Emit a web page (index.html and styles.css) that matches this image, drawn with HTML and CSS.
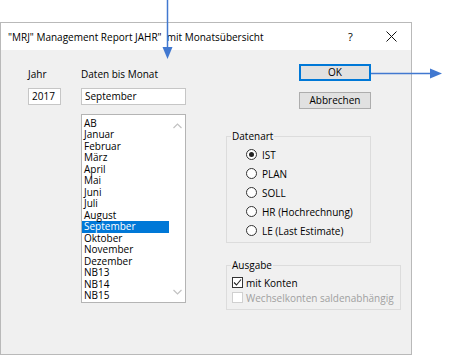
FILE: index.html
```html
<!DOCTYPE html>
<html lang="de">
<head>
    <meta charset="UTF-8">
    <meta name="viewport" content="width=device-width, initial-scale=1.0">
    <title>MRJ Management Report JAHR</title>
    <link rel="stylesheet" href="styles.css">
</head>
<body>
    <div class="dialog">
        <div class="titlebar">
            <span class="title">"MRJ" Management Report JAHR"&nbsp; mit Monatsübersicht</span>
            <span class="help">?</span>
            <span class="close">
                <svg width="11" height="11" viewBox="0 0 11 11"><path d="M0.5 0.5 L10.5 10.5 M10.5 0.5 L0.5 10.5" stroke="#111" stroke-width="1"/></svg>
            </span>
        </div>

        <div class="content">
            <div class="col-jahr">
                <div class="label">Jahr</div>
                <div class="textbox">2017</div>
            </div>

            <div class="col-monat">
                <div class="label">Daten bis Monat</div>
                <div class="textbox">September</div>
                <div class="listbox">
                    <ul class="items">
                        <li>AB</li>
                        <li>Januar</li>
                        <li>Februar</li>
                        <li>März</li>
                        <li>April</li>
                        <li>Mai</li>
                        <li>Juni</li>
                        <li>Juli</li>
                        <li>August</li>
                        <li class="selected">September</li>
                        <li>Oktober</li>
                        <li>November</li>
                        <li>Dezember</li>
                        <li>NB13</li>
                        <li>NB14</li>
                        <li>NB15</li>
                    </ul>
                    <div class="scrollbar">
                        <svg width="9" height="6" viewBox="0 0 9 6"><path d="M0.5 5 L4.5 1 L8.5 5" fill="none" stroke="#c2c2c2" stroke-width="1.2"/></svg>
                        <svg width="9" height="6" viewBox="0 0 9 6"><path d="M0.5 1 L4.5 5 L8.5 1" fill="none" stroke="#c2c2c2" stroke-width="1.2"/></svg>
                    </div>
                </div>
            </div>

            <div class="col-right">
                <div class="buttons">
                    <div class="btn btn-default">OK</div>
                    <div class="btn">Abbrechen</div>
                </div>

                <fieldset class="group datenart">
                    <legend>Datenart</legend>
                    <div class="option"><span class="radio checked"></span>IST</div>
                    <div class="option"><span class="radio"></span>PLAN</div>
                    <div class="option"><span class="radio"></span>SOLL</div>
                    <div class="option"><span class="radio"></span>HR (Hochrechnung)</div>
                    <div class="option"><span class="radio"></span>LE (Last Estimate)</div>
                </fieldset>

                <fieldset class="group ausgabe">
                    <legend>Ausgabe</legend>
                    <div class="check">
                        <span class="box">
                            <svg width="9" height="9" viewBox="0 0 9 9"><path d="M1 4.5 L3.5 7 L8 1.5" fill="none" stroke="#222" stroke-width="1.1"/></svg>
                        </span>mit Konten
                    </div>
                    <div class="check disabled"><span class="box"></span>Wechselkonten saldenabhängig</div>
                </fieldset>
            </div>
        </div>
    </div>

    <!-- annotation arrows drawn over the screenshot -->
    <svg class="annotations" width="455" height="355" viewBox="0 0 455 355">
        <line x1="167.5" y1="0" x2="167.5" y2="48" stroke="#4178d0" stroke-width="1.5"/>
        <polygon points="162.5,47 172.5,47 167.5,59" fill="#4178d0"/>
        <line x1="371" y1="73.5" x2="431" y2="73.5" stroke="#4178d0" stroke-width="1.5"/>
        <polygon points="430,68.5 430,78.5 442,73.5" fill="#4178d0"/>
    </svg>
</body>
</html>
```

FILE: styles.css
```css
body {
    margin: 0;
    padding-top: 22px;
    background: #fff;
    font-family: "Open Sans", "Noto Sans", sans-serif;
    font-size: 10px;
    color: #000;
    position: relative;
    width: 455px;
    height: 333px;
    overflow: hidden;
}

.dialog {
    width: 412px;
    height: 333px;
    box-sizing: border-box;
    border: 1px solid #b9b9b9;
    display: flex;
    flex-direction: column;
    background: #f0f0f0;
}

.titlebar {
    height: 27px;
    flex: none;
    background: #fff;
    display: flex;
    align-items: center;
    padding-left: 7px;
}

.title {
    flex: 1;
}

.help {
    width: 12px;
    font-size: 11px;
    margin-right: 26px;
}

.close {
    display: flex;
    margin-right: 14px;
}

.content {
    flex: 1;
    display: flex;
    padding: 14px 0 0 27px;
}

.label {
    line-height: 14px;
    margin-top: 3px;
}

.col-jahr {
    width: 53px;
}

.col-monat {
    width: 105px;
}

.textbox {
    margin-top: 7px;
    height: 17px;
    box-sizing: border-box;
    border: 1px solid #c6c6c6;
    background: #fff;
    line-height: 15px;
    padding-left: 3px;
}

.col-jahr .textbox {
    width: 33px;
}

.listbox {
    margin-top: 9px;
    height: 189px;
    box-sizing: border-box;
    border: 1px solid #b4b4b4;
    background: #fff;
    display: flex;
}

.items {
    list-style: none;
    margin: 0;
    padding: 3px 0 0;
    width: 87px;
}

.items li {
    height: 11.47px;
    line-height: 11.47px;
    padding-left: 2px;
}

.items li.selected {
    background: #0078d7;
    color: #fff;
}

.scrollbar {
    flex: 1;
    display: flex;
    flex-direction: column;
    justify-content: space-between;
    align-items: center;
    padding: 8px 0 7px;
}

.col-right {
    margin-left: 40px;
}

.buttons {
    margin-left: 73px;
    display: flex;
    flex-direction: column;
    gap: 11px;
}

.btn {
    width: 72px;
    height: 17px;
    box-sizing: border-box;
    border: 1px solid #adadad;
    background: #e1e1e1;
    text-align: center;
    line-height: 15px;
}

.btn-default {
    border: 2px solid #0078d7;
    line-height: 13px;
}

.group {
    margin: 0;
    padding: 0;
    min-width: 0;
    border: 1px solid #dcdcdc;
    box-sizing: border-box;
}

.group legend {
    margin-left: 4px;
    padding: 0 1px;
    line-height: 14px;
}

.datenart {
    margin-top: 20px;
    width: 145px;
    padding: 2px 0 2px;
}

.option {
    height: 19px;
    display: flex;
    align-items: center;
    padding-left: 19px;
}

.radio {
    width: 11px;
    height: 11px;
    box-sizing: border-box;
    border: 1px solid #333;
    border-radius: 50%;
    background: #fff;
    margin-right: 5px;
    display: flex;
    align-items: center;
    justify-content: center;
}

.radio.checked::after {
    content: "";
    width: 5px;
    height: 5px;
    border-radius: 50%;
    background: #222;
}

.ausgabe {
    margin-top: 15px;
    width: 175px;
    padding: 3px 0 4px;
}

.check {
    height: 15px;
    display: flex;
    align-items: center;
    padding-left: 5px;
}

.check .box {
    width: 11px;
    height: 11px;
    box-sizing: border-box;
    border: 1px solid #333;
    background: #fff;
    margin-right: 3px;
    display: flex;
    align-items: center;
    justify-content: center;
}

.check.disabled {
    color: #a0a0a0;
}

.check.disabled .box {
    border-color: #d0d0d0;
}

.annotations {
    position: absolute;
    top: 0;
    left: 0;
    pointer-events: none;
}
```
